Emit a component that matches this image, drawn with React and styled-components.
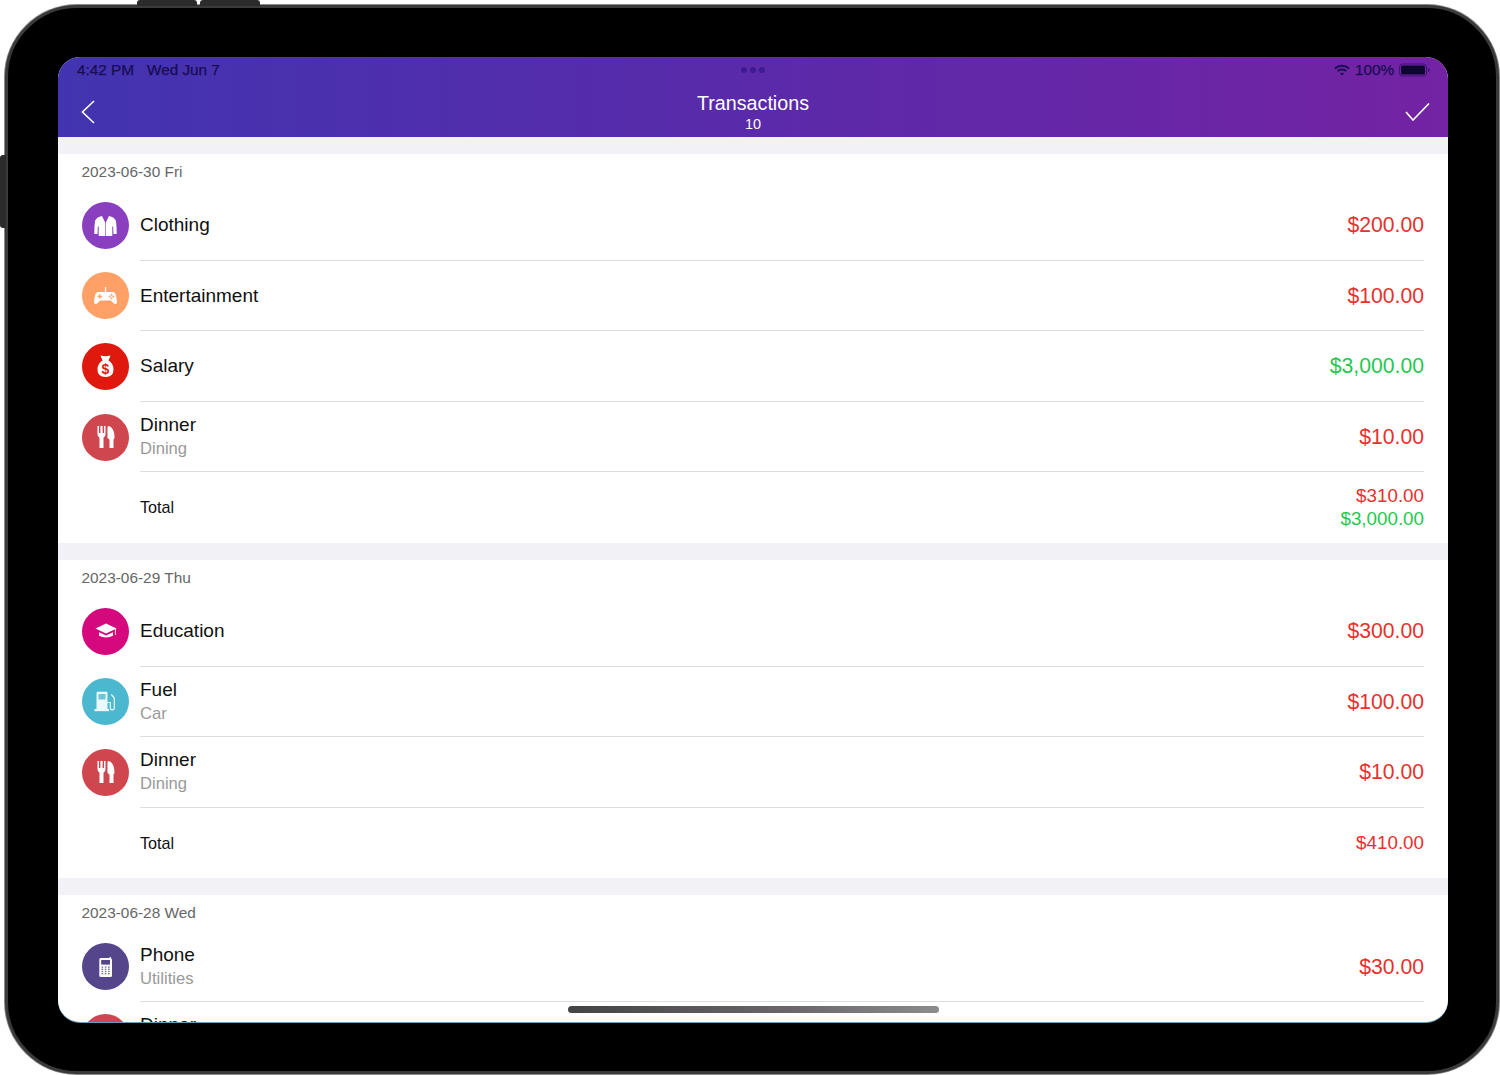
import React from "react";
import styled, { createGlobalStyle } from "styled-components";

const GlobalStyle = createGlobalStyle`
  html, body {
    margin: 0;
    padding: 0;
    background: #fff;
    height: 1075px;
    overflow: hidden;
    font-family: "Liberation Sans", Arial, sans-serif;
  }
`;

const Page = styled.div`
  position: relative;
  width: 1500px;
  height: 1075px;
  padding: 5px 0 0 5px;
  box-sizing: border-box;
`;

const HardwareButton = styled.div`
  position: absolute;
  background: #2b2b2b;
  left: ${(p) => p.$left}px;
  top: ${(p) => p.$top}px;
  width: ${(p) => p.$w}px;
  height: ${(p) => p.$h}px;
  border-radius: ${(p) => (p.$side ? "3px 0 0 3px" : "3px 3px 0 0")};
`;

const Device = styled.div`
  width: 1494px;
  height: 1069px;
  box-sizing: border-box;
  padding: 49px 0 0 50px;
  background: #000;
  border: 3px solid #3a3a3a;
  border-radius: 72px;
  box-shadow: 0 0 0 1px #8a8a8a;
`;

const Screen = styled.div`
  position: relative;
  width: 1390px;
  height: 965px;
  overflow: hidden;
  border-radius: 22px;
  background: #fff;
  box-shadow: 0 1px 0 #6d9db3;
`;

const Header = styled.header`
  height: 80px;
  background: linear-gradient(90deg, #4234b0 0%, #5a2aaa 50%, #7323a3 100%);
`;

const StatusBar = styled.div`
  height: 26px;
  padding: 0 18px 2px;
  display: grid;
  grid-template-columns: 1fr auto 1fr;
  align-items: center;
  color: #180c55;
  font-size: 15.3px;
  -webkit-text-stroke: 0.25px #180c55;
`;

const StatusLeft = styled.div`
  display: flex;
  gap: 13px;
  padding-left: 1px;
  white-space: nowrap;
`;

const StatusDots = styled.div`
  display: flex;
  gap: 3px;
`;

const StatusDot = styled.span`
  width: 6px;
  height: 6px;
  border-radius: 50%;
  background: #3d1c93;
`;

const StatusRight = styled.div`
  display: flex;
  justify-content: flex-end;
  align-items: center;
  gap: 5px;
`;

const NavBar = styled.div`
  height: 54px;
  padding: 0 18px 0 24px;
  display: grid;
  grid-template-columns: 100px 1fr 100px;
  align-items: center;
  color: #fff;
`;

const NavAction = styled.div`
  display: flex;
  justify-content: ${(p) => (p.$end ? "flex-end" : "flex-start")};
  margin-left: ${(p) => (p.$end ? 0 : -1)}px;
  margin-bottom: 1px;
`;

const NavTitle = styled.div`
  text-align: center;
  margin-left: -6px;
`;

const TitleText = styled.div`
  font-size: 19.7px;
  line-height: 24px;
`;

const TitleCount = styled.div`
  font-size: 14.4px;
  line-height: 18px;
`;

const Gap = styled.div`
  height: 17px;
  background: #f1f1f6;
`;

const DateRow = styled.div`
  height: 36px;
  padding-left: 23.5px;
  display: flex;
  align-items: center;
  font-size: 15.4px;
  color: #666;
`;

const Row = styled.div`
  height: 70.6px;
  padding-left: 23.5px;
  display: flex;
  align-items: stretch;
  gap: 11.5px;
`;

const IconCircle = styled.div`
  width: 47px;
  height: 47px;
  flex: none;
  align-self: center;
  border-radius: 50%;
  display: flex;
  align-items: center;
  justify-content: center;
  background: ${(p) => p.$color};
  color: #fff;
`;

const IconSlot = styled.div`
  width: 47px;
  flex: none;
`;

const RowBody = styled.div`
  flex: 1;
  margin-right: 24px;
  display: flex;
  justify-content: space-between;
  align-items: center;
  box-sizing: border-box;
  padding-top: ${(p) => (p.$last ? 0 : 1)}px;
  border-bottom: ${(p) => (p.$last ? "none" : "1px solid #dcdcdc")};
`;

const Name = styled.div`
  font-size: 19px;
  line-height: 24px;
  color: #111;
`;

const Sub = styled.div`
  font-size: 16.6px;
  line-height: 24px;
  color: #999;
`;

const Amount = styled.div`
  font-size: 21.2px;
  color: ${(p) => (p.$income ? "#1fc94f" : "#e8302c")};
`;

const TotalLabel = styled.div`
  font-size: 16.2px;
  color: #111;
`;

const TotalAmounts = styled.div`
  text-align: right;
  margin-top: -1px;
`;

const TotalAmount = styled.div`
  font-size: 18.8px;
  line-height: 23px;
  color: ${(p) => (p.$income ? "#1fc94f" : "#e8302c")};
`;

const HomeBar = styled.div`
  position: absolute;
  left: 510px;
  top: 949px;
  width: 371px;
  height: 7px;
  border-radius: 4px;
  background: linear-gradient(90deg, #444 0%, #6a666a 60%, #8c8c8c 100%);
`;

const Clothing = () => (
  <svg width="47" height="47" viewBox="0 0 47 47" fill="#fff">
    <path d="M20 14 Q14.5 15 13 19 Q12.3 24 12.3 32 H15.6 L15.8 24.5 H16.7 V34 H23.2 V20.5 Z" />
    <path d="M27 14 Q32.5 15 34 19 Q34.7 24 34.7 32 H31.4 L31.2 24.5 H30.3 V34 H23.8 V20.5 Z" />
  </svg>
);

const Gamepad = () => (
  <svg width="47" height="47" viewBox="0 0 47 47">
    <path d="M23.5 15 V20" stroke="#fff" strokeWidth="1.2" />
    <path
      fill="#fff"
      d="M16.5 20 H30.5 Q33.5 20 34.3 25 L35 30 Q35 32.5 32.8 32 Q31 31 29 28.5 H18 Q16 31 14.2 32 Q12 32.5 12 30 L12.7 25 Q13.5 20 16.5 20 Z"
    />
    <path d="M15.5 24.5 H20 M17.75 22.2 V26.8" stroke="#ffa066" strokeWidth="1.3" />
    <circle cx="29.5" cy="22.8" r="1" fill="#ffa066" />
    <circle cx="29.5" cy="26.4" r="1" fill="#ffa066" />
    <circle cx="27.7" cy="24.6" r="1" fill="#ffa066" />
    <circle cx="31.3" cy="24.6" r="1" fill="#ffa066" />
  </svg>
);

const Salary = () => (
  <svg width="47" height="47" viewBox="0 0 47 47">
    <path fill="#fff" d="M18.5 12.5 Q23.5 14 28.5 12.5 L26.5 17.5 Q31.5 20.5 31.5 26.5 Q31.5 34 23.5 34 Q15.5 34 15.5 26.5 Q15.5 20.5 20.5 17.5 Z" />
    <text x="23.5" y="31" textAnchor="middle" fontFamily="Liberation Sans, Arial, sans-serif" fontWeight="700" fontSize="14" fill="#e0190f">
      $
    </text>
  </svg>
);

const Dining = () => (
  <svg width="47" height="47" viewBox="0 0 47 47" fill="#fff">
    <path d="M15.5 12 V20 Q15.5 23 17.5 23.8 V34 H21.5 V23.8 Q23.5 23 23.5 20 V12 H22 V19 H20.6 V12 H18.4 V19 H17 V12 Z" />
    <path d="M26.5 12 C30.5 13 32.5 17 32.5 24 L31.5 25.5 V34 H27.5 V25.5 L25.5 24 V14 Q25.5 12 26.5 12 Z" />
  </svg>
);

const Education = () => (
  <svg width="47" height="47" viewBox="0 0 47 47" fill="#fff">
    <path d="M24 15.5 L34.5 20.5 L24 25.5 L13.5 20.5 Z" />
    <path d="M17 24.2 V27.8 Q24 31.2 31 27.8 V24.2 L24 27.5 Z" />
    <path d="M33.4 21 V27" stroke="#fff" strokeWidth="0.9" />
  </svg>
);

const Fuel = () => (
  <svg width="47" height="47" viewBox="0 0 47 47">
    <path fill="#eaf9fc" d="M14.5 15 Q14.5 13.8 15.7 13.8 H24.3 Q25.5 13.8 25.5 15 V31 H14.5 Z" />
    <rect x="16.5" y="16" width="7" height="5.5" rx="0.6" fill="#6fc5d8" />
    <rect x="12.5" y="31" width="14.5" height="2.2" fill="#eaf9fc" />
    <path
      d="M25.5 24.5 H28.3 V30 Q28.3 31.8 30.3 31.8 Q32.3 31.8 32.3 30 V20 L29.3 16.5"
      fill="none"
      stroke="#eaf9fc"
      strokeWidth="1.2"
    />
  </svg>
);

const Phone = () => (
  <svg width="47" height="47" viewBox="0 0 47 47">
    <path fill="#fff" d="M18.8 15 H27.5 V14 H29 V15.2 Q30 15.6 30 17 V32.5 Q30 34 28.5 34 H18.8 Q17.3 34 17.3 32.5 V16.5 Q17.3 15 18.8 15 Z" />
    <rect x="19.2" y="17" width="8.8" height="4.6" fill="#55468c" />
    {[23.4, 25.6, 27.8, 30].map((y) =>
      [19.6, 22.8, 26].map((x) => <rect key={`${x}-${y}`} x={x} y={y} width="1.6" height="1.4" fill="#7d72a8" />)
    )}
  </svg>
);

const dining = { name: "Dinner", sub: "Dining", amount: "$10.00", color: "#d0464f", Icon: Dining };

const sections = [
  {
    date: "2023-06-30 Fri",
    rows: [
      { name: "Clothing", amount: "$200.00", color: "#8a3fbf", Icon: Clothing },
      { name: "Entertainment", amount: "$100.00", color: "#ffa066", Icon: Gamepad },
      { name: "Salary", amount: "$3,000.00", income: true, color: "#e0190f", Icon: Salary },
      dining,
    ],
    totals: [{ value: "$310.00" }, { value: "$3,000.00", income: true }],
  },
  {
    date: "2023-06-29 Thu",
    rows: [
      { name: "Education", amount: "$300.00", color: "#d6087e", Icon: Education },
      { name: "Fuel", sub: "Car", amount: "$100.00", color: "#4cb8cf", Icon: Fuel },
      dining,
    ],
    totals: [{ value: "$410.00" }],
  },
  {
    date: "2023-06-28 Wed",
    rows: [
      { name: "Phone", sub: "Utilities", amount: "$30.00", color: "#55468c", Icon: Phone },
      dining,
    ],
  },
];

const App = () => (
  <Page>
    <GlobalStyle />
    <HardwareButton $left={137} $top={0} $w={60} $h={6} />
    <HardwareButton $left={200} $top={0} $w={60} $h={6} />
    <HardwareButton $side $left={0} $top={155} $w={6} $h={73} />
    <Device>
      <Screen>
        <Header>
          <StatusBar>
            <StatusLeft>
              <span>4:42 PM</span>
              <span>Wed Jun 7</span>
            </StatusLeft>
            <StatusDots>
              <StatusDot />
              <StatusDot />
              <StatusDot />
            </StatusDots>
            <StatusRight>
              <svg width="16" height="12" viewBox="0 0 16 12" fill="none" stroke="#180c55" strokeWidth="2">
                <path d="M1 4.4 C5 .9 11 .9 15 4.4" />
                <path d="M3.6 7 C6 5 10 5 12.4 7" />
                <path d="M8 11.6 L5.9 9.4 C7 8.5 9 8.5 10.1 9.4 Z" fill="#180c55" stroke="none" />
              </svg>
              <span>100%</span>
              <svg width="31" height="14" viewBox="0 0 31 14">
                <rect x="0.5" y="1" width="27" height="12" rx="3" fill="none" stroke="#180c55" strokeOpacity="0.6" />
                <rect x="2" y="2.5" width="24" height="9" rx="1.6" fill="#0c0630" />
                <rect x="29" y="5" width="1.5" height="4" rx="0.7" fill="#180c55" fillOpacity="0.6" />
              </svg>
            </StatusRight>
          </StatusBar>
          <NavBar>
            <NavAction>
              <svg width="14" height="24" viewBox="0 0 14 24" fill="none" stroke="#fff" strokeWidth="1.6">
                <path d="M13 1 L1.5 12 L13 23" />
              </svg>
            </NavAction>
            <NavTitle>
              <TitleText>Transactions</TitleText>
              <TitleCount>10</TitleCount>
            </NavTitle>
            <NavAction $end>
              <svg width="25" height="20" viewBox="0 0 25 20" fill="none" stroke="#fff" strokeWidth="1.6">
                <path d="M1 10 L8 18 L24 1.5" />
              </svg>
            </NavAction>
          </NavBar>
        </Header>
        {sections.map((section) => (
          <section key={section.date}>
            <Gap />
            <DateRow>{section.date}</DateRow>
            {section.rows.map((row, i) => (
              <Row key={i}>
                <IconCircle $color={row.color}>
                  <row.Icon />
                </IconCircle>
                <RowBody>
                  <div>
                    <Name>{row.name}</Name>
                    {row.sub && <Sub>{row.sub}</Sub>}
                  </div>
                  <Amount $income={row.income}>{row.amount}</Amount>
                </RowBody>
              </Row>
            ))}
            {section.totals && (
              <Row>
                <IconSlot />
                <RowBody $last>
                  <TotalLabel>Total</TotalLabel>
                  <TotalAmounts>
                    {section.totals.map((t) => (
                      <TotalAmount key={t.value} $income={t.income}>
                        {t.value}
                      </TotalAmount>
                    ))}
                  </TotalAmounts>
                </RowBody>
              </Row>
            )}
          </section>
        ))}
        <HomeBar />
      </Screen>
    </Device>
  </Page>
);

export default App;
